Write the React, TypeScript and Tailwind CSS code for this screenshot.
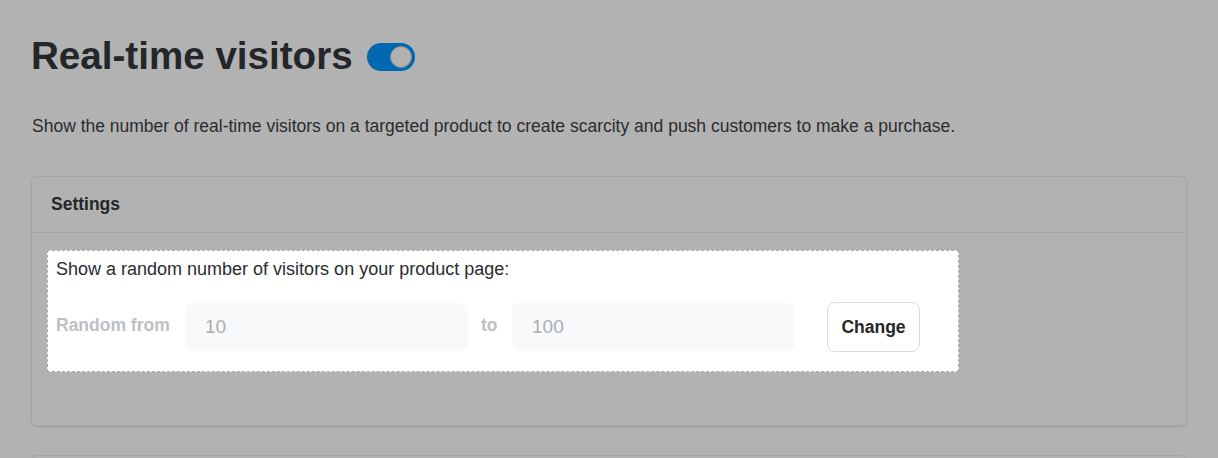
import React from "react";

export default function App() {
  return (
    <div className="min-h-screen bg-[#b2b2b2] text-[#212529] font-['Liberation_Sans',Arial,sans-serif] px-[31px] pt-[34px] overflow-hidden h-[458px]">
      {/* Header */}
      <div className="flex items-center gap-[14px] h-[44px]">
        <h1 className="text-[38.6px] font-bold leading-none text-[#24272a]">Real-time visitors</h1>
        <div className="w-[48px] h-[28px] rounded-full bg-[#0068b0] flex items-center justify-end pr-[3px] mt-[2px]">
          <span className="w-[22px] h-[22px] rounded-full bg-[#b1b1b1] border border-[#8a8a8a]" />
        </div>
      </div>

      <p className="mt-[36px] text-[17.5px] leading-[24px] text-[#2a2c2e] pl-px">
        Show the number of real-time visitors on a targeted product to create scarcity and push customers to make a purchase.
      </p>

      {/* Settings card */}
      <div className="mt-[38px] w-[1156px] rounded-[6px] border border-[#a6a6a6] shadow-[0_1px_2px_rgba(0,0,0,0.12)]">
        <div className="h-[56px] flex items-center px-[19px] border-b border-[#a6a6a6]">
          <h2 className="text-[17.5px] font-bold text-[#24272a]">Settings</h2>
        </div>
        <div className="pt-[17px] pb-[53px] px-[15px]">
          <div className="w-[912px] bg-white border border-dashed border-[#a9a9a9] px-[8px] pt-[7px] pb-[19px]">
            <p className="text-[18px] leading-[22px] text-[#2a2c2e]">Show a random number of visitors on your product page:</p>
            <div className="flex items-center mt-[22px]">
              <span className="text-[17.5px] font-bold text-[#bcc1c5] w-[129px] -mt-[4px]">Random from</span>
              <div className="w-[283px] h-[48px] rounded-[8px] bg-[#f8f9fa] flex items-center px-[20px] text-[19px] text-[#a9afb4]">10</div>
              <span className="text-[17.5px] font-bold text-[#bcc1c5] w-[44px] pl-[13px] -mt-[4px]">to</span>
              <div className="w-[283px] h-[48px] rounded-[8px] bg-[#f8f9fa] flex items-center px-[20px] text-[19px] text-[#a9afb4]">100</div>
              <button className="ml-[32px] w-[93px] h-[50px] rounded-[8px] bg-white border border-[#dcdcdc] text-[17.5px] font-bold text-[#24272a]">
                Change
              </button>
            </div>
          </div>
        </div>
      </div>

      <div className="mt-[29px] w-[1156px] h-[40px] rounded-[6px] border border-[#a6a6a6]" />
    </div>
  );
}
